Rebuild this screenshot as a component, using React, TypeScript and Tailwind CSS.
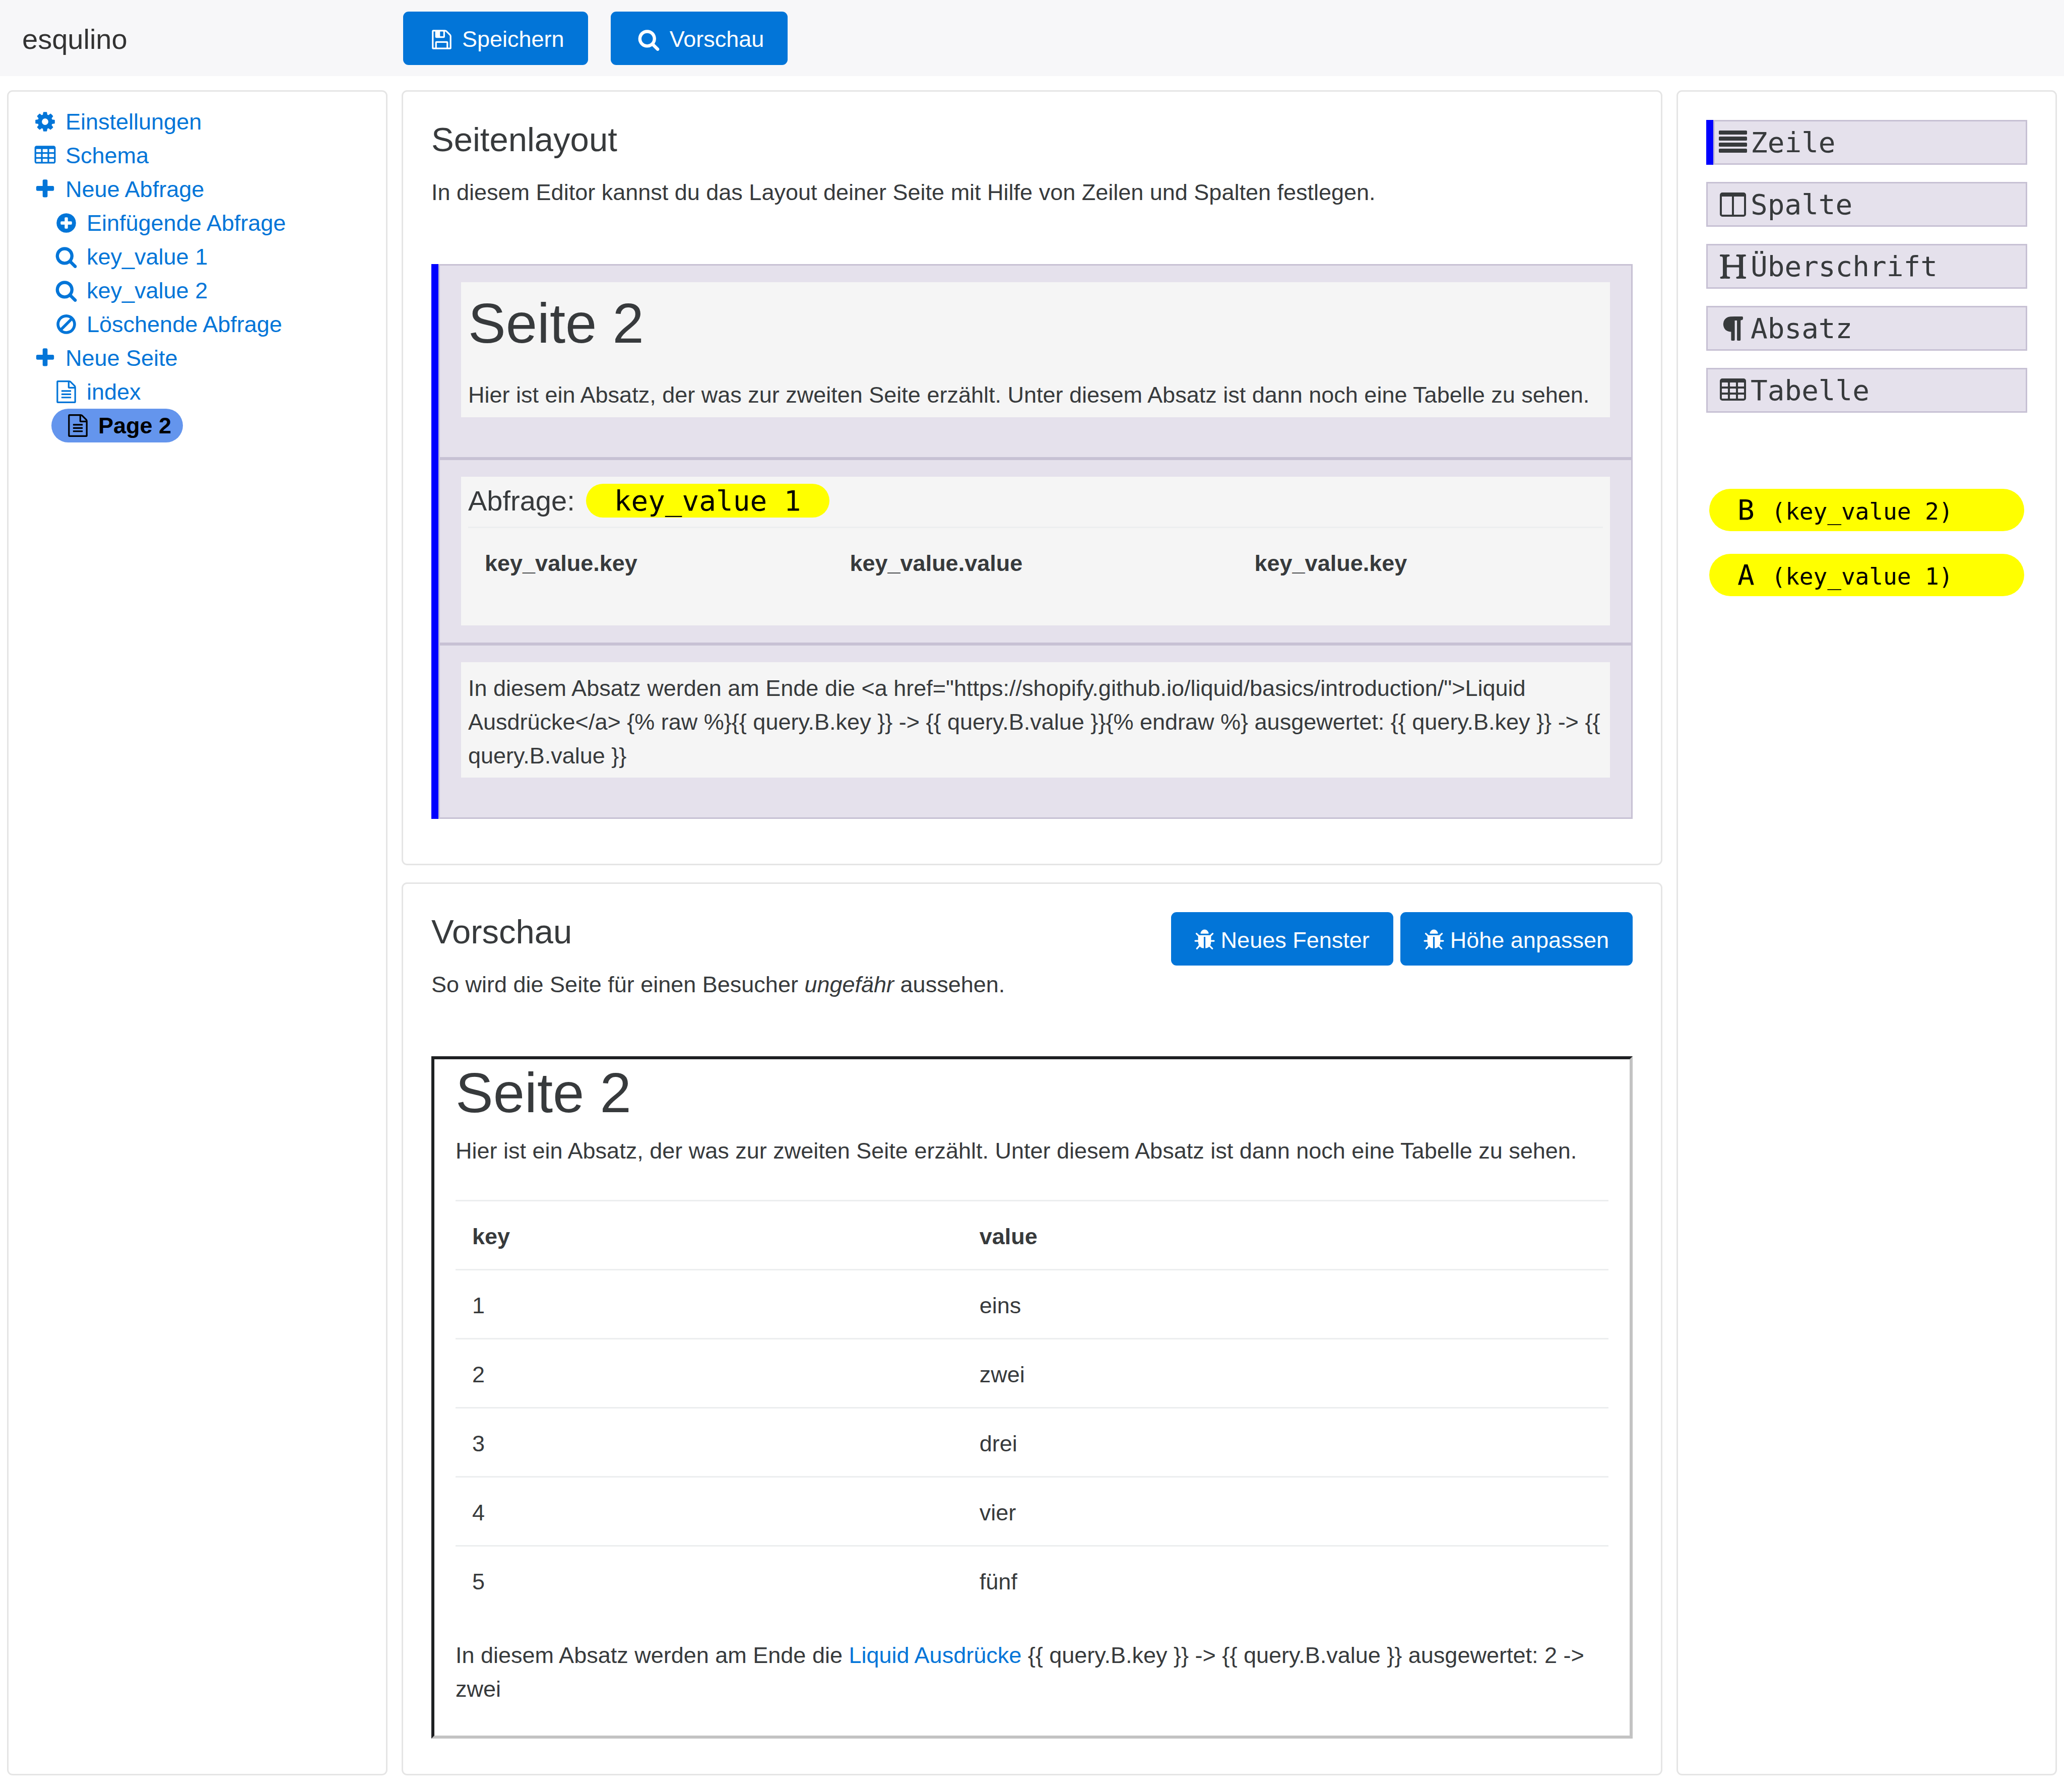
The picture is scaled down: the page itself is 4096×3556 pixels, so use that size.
import type { ReactNode } from "react";

const ICONS = {
  cog: "M1152 896q0-106-75-181t-181-75-181 75-75 181 75 181 181 75 181-75 75-181zm512-109v222q0 12-8 23t-20 13l-185 28q-19 54-39 91 35 50 107 138 10 12 10 25t-9 23q-27 37-99 108t-94 71q-12 0-26-9l-138-108q-44 23-91 38-16 136-29 186-7 28-36 28h-222q-14 0-24.5-8.5t-11.5-21.5l-28-184q-49-16-90-37l-141 107q-10 9-25 9-14 0-25-11-126-114-165-168-7-10-7-23 0-12 8-23 15-21 51-66.5t54-70.5q-27-50-41-99l-183-27q-13-2-21-12.5t-8-23.5v-222q0-12 8-23t19-13l186-28q14-46 39-92-40-57-107-138-10-12-10-24 0-10 9-23 26-36 98.5-107.5t94.5-71.5q13 0 26 10l138 107q44-23 91-38 16-136 29-186 7-28 36-28h222q14 0 24.5 8.5t11.5 21.5l28 184q49 16 90 37l142-107q9-9 24-9 13 0 25 10 129 119 165 170 7 8 7 22 0 12-8 23-15 21-51 66.5t-54 70.5q26 50 41 98l183 28q13 2 21 12.5t8 23.5z",
  table:
    "M576 1376v-192q0-14-9-23t-23-9h-320q-14 0-23 9t-9 23v192q0 14 9 23t23 9h320q14 0 23-9t9-23zm0-384v-192q0-14-9-23t-23-9h-320q-14 0-23 9t-9 23v192q0 14 9 23t23 9h320q14 0 23-9t9-23zm512 384v-192q0-14-9-23t-23-9h-320q-14 0-23 9t-9 23v192q0 14 9 23t23 9h320q14 0 23-9t9-23zm-512-768v-192q0-14-9-23t-23-9h-320q-14 0-23 9t-9 23v192q0 14 9 23t23 9h320q14 0 23-9t9-23zm512 384v-192q0-14-9-23t-23-9h-320q-14 0-23 9t-9 23v192q0 14 9 23t23 9h320q14 0 23-9t9-23zm512 384v-192q0-14-9-23t-23-9h-320q-14 0-23 9t-9 23v192q0 14 9 23t23 9h320q14 0 23-9t9-23zm-512-768v-192q0-14-9-23t-23-9h-320q-14 0-23 9t-9 23v192q0 14 9 23t23 9h320q14 0 23-9t9-23zm512 384v-192q0-14-9-23t-23-9h-320q-14 0-23 9t-9 23v192q0 14 9 23t23 9h320q14 0 23-9t9-23zm0-384v-192q0-14-9-23t-23-9h-320q-14 0-23 9t-9 23v192q0 14 9 23t23 9h320q14 0 23-9t9-23zm128-320v1088q0 66-47 113t-113 47h-1344q-66 0-113-47t-47-113v-1088q0-66 47-113t113-47h1344q66 0 113 47t47 113z",
  plus: "M1600 736v192q0 40-28 68t-68 28h-416v416q0 40-28 68t-68 28h-192q-40 0-68-28t-28-68v-416h-416q-40 0-68-28t-28-68v-192q0-40 28-68t68-28h416v-416q0-40 28-68t68-28h192q40 0 68 28t28 68v416h416q40 0 68 28t28 68z",
  plusCircle:
    "M1344 960v-128q0-26-19-45t-45-19h-256v-256q0-26-19-45t-45-19h-128q-26 0-45 19t-19 45v256h-256q-26 0-45 19t-19 45v128q0 26 19 45t45 19h256v256q0 26 19 45t45 19h128q26 0 45-19t19-45v-256h256q26 0 45-19t19-45zm320-64q0 209-103 385.5t-279.5 279.5-385.5 103-385.5-103-279.5-279.5-103-385.5 103-385.5 279.5-279.5 385.5-103 385.5 103 279.5 279.5 103 385.5z",
  search:
    "M1216 832q0-185-131.5-316.5t-316.5-131.5-316.5 131.5-131.5 316.5 131.5 316.5 316.5 131.5 316.5-131.5 131.5-316.5zm512 832q0 52-38 90t-90 38q-54 0-90-38l-343-342q-179 124-399 124-143 0-273.5-55.5t-225-150-150-225-55.5-273.5 55.5-273.5 150-225 225-150 273.5-55.5 273.5 55.5 225 150 150 225 55.5 273.5q0 220-124 399l343 343q37 37 37 90z",
  ban: "M1440 893q0-161-87-295l-754 753q137 89 297 89 111 0 211.5-43.5t173.5-116.5 116-174.5 43-212.5zm-999 299l755-754q-135-91-300-91-148 0-273 73t-198 199-73 274q0 162 89 299zm1223-299q0 157-61 300t-163.5 246-245 164-298.5 61-298.5-61-245-164-163.5-246-61-300 61-299.5 163.5-245.5 245-164 298.5-61 298.5 61 245 164 163.5 245.5 61 299.5z",
  file: "M1596 380q28 28 48 76t20 88v1152q0 40-28 68t-68 28h-1344q-40 0-68-28t-28-68v-1600q0-40 28-68t68-28h896q40 0 88 20t76 48zm-444-244v376h376q-10-29-22-41l-313-313q-12-12-41-22zm384 1528v-1024h-416q-40 0-68-28t-28-68v-416h-768v1536h1280zm-1024-864q0-14 9-23t23-9h704q14 0 23 9t9 23v64q0 14-9 23t-23 9h-704q-14 0-23-9t-9-23v-64zm736 224q14 0 23 9t9 23v64q0 14-9 23t-23 9h-704q-14 0-23-9t-9-23v-64q0-14 9-23t23-9h704zm0 256q14 0 23 9t9 23v64q0 14-9 23t-23 9h-704q-14 0-23-9t-9-23v-64q0-14 9-23t23-9h704z",
  floppy:
    "M512 1536h768v-384h-768v384zm896 0h128v-896q0-14-10-38.5t-20-34.5l-281-281q-10-10-34-20t-39-10v416q0 40-28 68t-68 28h-576q-40 0-68-28t-28-68v-416h-128v1280h128v-416q0-40 28-68t68-28h832q40 0 68 28t28 68v416zm-384-928v-320q0-13-9.5-22.5t-22.5-9.5h-192q-13 0-22.5 9.5t-9.5 22.5v320q0 13 9.5 22.5t22.5 9.5h192q13 0 22.5-9.5t9.5-22.5zm640 32v928q0 40-28 68t-68 28h-1344q-40 0-68-28t-28-68v-1344q0-40 28-68t68-28h928q40 0 88 20t76 48l280 280q28 28 48 76t20 88z",
  bug: "M1696 960q0 26-19 45t-45 19h-224q0 171-67 290l208 209q19 19 19 45t-19 45q-18 19-45 19t-45-19l-198-197q-5 5-15 13t-42 28.5-65 36.5-82 29-97 13v-896h-128v896q-51 0-101.5-13.5t-87-33-66-39-43.5-32.5l-15-14-183 207q-20 21-48 21-24 0-43-16-19-18-20.5-44.5t15.5-46.5l202-227q-58-114-58-274h-224q-26 0-45-19t-19-45 19-45 45-19h224v-294l-173-173q-19-19-19-45t19-45 45-19 45 19l173 173h844l173-173q19-19 45-19t45 19 19 45-19 45l-173 173v294h224q26 0 45 19t19 45zm-480-576h-640q0-133 93.5-226.5t226.5-93.5 226.5 93.5 93.5 226.5z",
  rows: "M1792 1344v128q0 26-19 45t-45 19h-1664q-26 0-45-19t-19-45v-128q0-26 19-45t45-19h1664q26 0 45 19t19 45zm0-384v128q0 26-19 45t-45 19h-1664q-26 0-45-19t-19-45v-128q0-26 19-45t45-19h1664q26 0 45 19t19 45zm0-384v128q0 26-19 45t-45 19h-1664q-26 0-45-19t-19-45v-128q0-26 19-45t45-19h1664q26 0 45 19t19 45zm0-384v128q0 26-19 45t-45 19h-1664q-26 0-45-19t-19-45v-128q0-26 19-45t45-19h1664q26 0 45 19t19 45z",
  columns:
    "M224 1536h608v-1152h-640v1120q0 13 9.5 22.5t22.5 9.5zm1376-32v-1120h-640v1152h608q13 0 22.5-9.5t9.5-22.5zm128-1216v1216q0 66-47 113t-113 47h-1344q-66 0-113-47t-47-113v-1216q0-66 47-113t113-47h1344q66 0 113 47t47 113z",
  heading:
    "M1682 1664q-44 0-132.5-3.5t-133.5-3.5q-44 0-132 3.5t-132 3.5q-24 0-37-20.5t-13-45.5q0-31 17-46t39-17 51-7 45-15q33-21 33-140l-1-391q0-21-1-31-13-4-50-4h-675q-38 0-51 4-1 10-1 31l-1 371q0 142 37 164 16 10 48 13t57 3.5 45 15 20 45.5q0 26-12.5 48t-36.5 22q-47 0-139.5-3.5t-138.5-3.5q-43 0-128 3.5t-127 3.5q-23 0-35.5-21t-12.5-45q0-30 15.5-45t36-17.5 47.5-7.5 42-15q33-23 33-143l-1-57v-813q0-3 .5-26t0-36.5-1.5-38.5-3.5-42-6.5-36.5-11-31.5-16-18q-15-10-45-12t-53-2-41-14-18-45q0-26 12-48t36-22q46 0 138.5 3.5t138.5 3.5q42 0 126.5-3.5t126.5-3.5q25 0 37.5 22t12.5 48q0 30-17 43.5t-38.5 14.5-49.5 4-43 13q-35 21-35 160l1 320q0 21 1 32 13 3 39 3h699q25 0 38-3 1-11 1-32l1-320q0-139-35-160-18-11-58.5-12.5t-66-13-25.5-49.5q0-26 12.5-48t37.5-22q44 0 132 3.5t132 3.5q43 0 129-3.5t129-3.5q25 0 37.5 22t12.5 48q0 30-17.5 44t-40 14.5-51.5 3-44 12.5q-35 23-35 161l1 943q0 119 34 140 16 10 46 13.5t53.5 4.5 41.5 15.5 18 44.5q0 26-12 48t-36 22z",
  paragraph:
    "M1534 189v73q0 29-18.5 61t-42.5 32q-50 0-54 1-26 6-32 31-3 11-3 64v1152q0 25-18 43t-43 18h-108q-25 0-43-18t-18-43v-1218h-143v1218q0 25-17.5 43t-43.5 18h-108q-26 0-43.5-18t-17.5-43v-496q-147-12-245-59-126-58-192-179-64-117-64-259 0-166 88-286 88-118 209-159 111-37 417-37h479q25 0 43 18t18 43z",
};

type IconName = keyof typeof ICONS;

function Icon({ name, className }: { name: IconName; className: string }) {
  return (
    <svg viewBox="0 0 1792 1792" fill="currentColor" aria-hidden="true" className={`shrink-0 overflow-visible ${className}`}>
      <path d={ICONS[name]} />
    </svg>
  );
}

function Button({ icon, wide, children }: { icon: IconName; wide?: boolean; children: ReactNode }) {
  return (
    <button
      type="button"
      className="flex h-[106px] items-center gap-3 rounded-[11px] bg-[#0275d8] px-[47px] pt-[5px] leading-[56px] whitespace-nowrap text-white"
    >
      <span className={wide ? "flex w-[58px] justify-center" : "flex w-10 justify-center"}>
        <Icon name={icon} className="size-[45px]" />
      </span>
      {children}
    </button>
  );
}

function Card({ className, children }: { className: string; children: ReactNode }) {
  return <section className={`rounded-[11px] border-[3px] border-[#e5e5e5] bg-white ${className}`}>{children}</section>;
}

const NAV: { icon: IconName; label: string; nested?: boolean; active?: boolean }[] = [
  { icon: "cog", label: "Einstellungen" },
  { icon: "table", label: "Schema" },
  { icon: "plus", label: "Neue Abfrage" },
  { icon: "plusCircle", label: "Einfügende Abfrage", nested: true },
  { icon: "search", label: "key_value 1", nested: true },
  { icon: "search", label: "key_value 2", nested: true },
  { icon: "ban", label: "Löschende Abfrage", nested: true },
  { icon: "plus", label: "Neue Seite" },
  { icon: "file", label: "index", nested: true },
  { icon: "file", label: "Page 2", nested: true, active: true },
];

const WIDGETS: { icon: IconName; label: string }[] = [
  { icon: "rows", label: "Zeile" },
  { icon: "columns", label: "Spalte" },
  { icon: "heading", label: "Überschrift" },
  { icon: "paragraph", label: "Absatz" },
  { icon: "table", label: "Tabelle" },
];

const QUERIES = [
  { alias: "B", name: "(key_value 2)" },
  { alias: "A", name: "(key_value 1)" },
];

const VALUES = [
  ["1", "eins"],
  ["2", "zwei"],
  ["3", "drei"],
  ["4", "vier"],
  ["5", "fünf"],
];

function LayoutRow({ className, children }: { className: string; children: ReactNode }) {
  return (
    <div className={`border-[3px] border-[#c7c1d4] bg-[#e5e1ec] px-[42px] pt-[33px] ${className}`}>
      <div className="bg-[#f5f5f5] px-[14px]">{children}</div>
    </div>
  );
}

export default function App() {
  return (
    <div className="flex min-h-screen flex-col bg-white font-['Liberation_Sans',Arial,sans-serif] text-[45px] leading-[67px] text-[#373a3c]">
      <header className="grid h-[151px] grid-cols-[755fr_2502fr_755fr] items-center gap-7 bg-[#f7f7f9] px-[14px]">
        <a href="#" className="px-[30px] pt-[5px] text-[56px] leading-[84px] text-[#333333]">
          esqulino
        </a>
        <div className="flex gap-[45px] pl-[3px]">
          <Button icon="floppy" wide>
            Speichern
          </Button>
          <Button icon="search" wide>
            Vorschau
          </Button>
        </div>
      </header>

      <main className="grid grow grid-cols-[755fr_2502fr_755fr] gap-7 px-[14px] pt-7 pb-[35px]">
        <Card className="pt-[26px]">
          <nav>
            <ul className="pl-[43px]">
              {NAV.map((item) => (
                <li key={item.label} className={item.nested ? "flex pl-[42px]" : "flex"}>
                  <a
                    href="#"
                    className={
                      item.active
                        ? "flex items-center gap-3 rounded-full bg-[#6495ed] px-[23px] font-bold text-black"
                        : "flex items-center gap-3 text-[#0275d8]"
                    }
                  >
                    <span className="flex w-[58px] justify-center">
                      <Icon name={item.icon} className="size-[45px]" />
                    </span>
                    {item.label}
                  </a>
                </li>
              ))}
            </ul>
          </nav>
        </Card>

        <div className="flex min-w-0 flex-col gap-[34px]">
          <Card className="px-14 pt-[58px] pb-[89px]">
            <h4 className="text-[67px] leading-[74px]">Seitenlayout</h4>
            <p className="mt-[34px]">
              In diesem Editor kannst du das Layout deiner Seite mit Hilfe von Zeilen und Spalten festlegen.
            </p>
            <div className="mt-[109px] border-l-[14px] border-[#0000ff]">
              <LayoutRow className="pb-[79px]">
                <h1 className="pt-5 text-[112px] leading-[123px]">Seite 2</h1>
                <p className="mt-[47px] pb-[11px]">
                  Hier ist ein Absatz, der was zur zweiten Seite erzählt. Unter diesem Absatz ist dann noch eine Tabelle zu
                  sehen.
                </p>
              </LayoutRow>
              <LayoutRow className="pb-[34px]">
                <div className="flex items-center gap-[22px] pt-[14px] text-[56px]">
                  Abfrage:
                  <span className="rounded-full bg-[#ffff00] px-14 font-['DejaVu_Sans_Mono',monospace] text-black">
                    key_value 1
                  </span>
                </div>
                <div className="pt-[18px] pb-[59px]">
                  <table className="w-full text-left">
                    <thead>
                      <tr className="border-t-[3px] border-[#eceeef]">
                        <th className="px-[33px] pt-9 pb-[31px]">key_value.key</th>
                        <th className="px-[33px] pt-9 pb-[31px]">key_value.value</th>
                        <th className="px-[33px] pt-9 pb-[31px]">key_value.key</th>
                      </tr>
                    </thead>
                  </table>
                </div>
              </LayoutRow>
              <LayoutRow className="pb-[79px]">
                <p className="pt-[18px] pb-[10px]">
                  {
                    'In diesem Absatz werden am Ende die <a href="https://shopify.github.io/liquid/basics/introduction/">Liquid Ausdrücke</a> {% raw %}{{ query.B.key }} -> {{ query.B.value }}{% endraw %} ausgewertet: {{ query.B.key }} -> {{ query.B.value }}'
                  }
                </p>
              </LayoutRow>
            </div>
          </Card>

          <Card className="grow px-14 pt-14 pb-[70px]">
            <div className="flex items-start justify-between">
              <div className="pt-[2px]">
                <h4 className="text-[67px] leading-[74px]">Vorschau</h4>
                <p className="mt-[34px]">
                  So wird die Seite für einen Besucher <em>ungefähr</em> aussehen.
                </p>
              </div>
              <div className="flex gap-[14px]">
                <Button icon="bug">Neues Fenster</Button>
                <Button icon="bug">Höhe anpassen</Button>
              </div>
            </div>
            <div className="mt-[109px] border-6 border-t-[#1e2022] border-r-[#c3c3c3] border-b-[#c3c3c3] border-l-[#1e2022] px-[42px] pt-[5px] pb-[59px]">
              <h1 className="text-[112px] leading-[123px]">Seite 2</h1>
              <p className="mt-5">
                Hier ist ein Absatz, der was zur zweiten Seite erzählt. Unter diesem Absatz ist dann noch eine Tabelle zu
                sehen.
              </p>
              <table className="mt-16 w-full text-left">
                <thead>
                  <tr className="border-t-[3px] border-[#eceeef]">
                    <th className="w-[44%] px-[33px] pt-9 pb-[31px]">key</th>
                    <th className="px-[33px] pt-9 pb-[31px]">value</th>
                  </tr>
                </thead>
                <tbody>
                  {VALUES.map(([key, value]) => (
                    <tr key={key} className="border-t-[3px] border-[#eceeef]">
                      <td className="px-[33px] pt-9 pb-[31px]">{key}</td>
                      <td className="px-[33px] pt-9 pb-[31px]">{value}</td>
                    </tr>
                  ))}
                </tbody>
              </table>
              <p className="mt-12">
                In diesem Absatz werden am Ende die{" "}
                <a href="#" className="text-[#0275d8]">
                  Liquid Ausdrücke
                </a>
                {" {{ query.B.key }} -> {{ query.B.value }} ausgewertet: 2 -> zwei"}
              </p>
            </div>
          </Card>
        </div>

        <Card className="px-14 pt-14 font-['DejaVu_Sans_Mono',monospace] text-[56px]">
          <ul className="flex flex-col gap-[34px]">
            {WIDGETS.map((widget, index) => (
              <li key={widget.label} className={index === 0 ? "border-l-[14px] border-[#0000ff]" : ""}>
                <div
                  className={
                    index === 0
                      ? "flex items-center border-[3px] border-[#c7c1d4] bg-[#e5e1ec] py-2"
                      : "flex items-center border-[3px] border-[#c7c1d4] bg-[#e5e1ec] px-[14px] py-2"
                  }
                >
                  <span className="flex w-[71px] justify-center">
                    <Icon name={widget.icon} className="size-14" />
                  </span>
                  {widget.label}
                </div>
              </li>
            ))}
          </ul>
          <ul className="mx-[6px] mt-[151px] flex flex-col gap-[45px] text-black">
            {QUERIES.map((query) => (
              <li key={query.alias} className="flex items-baseline rounded-full bg-[#ffff00] px-14 leading-[84px] whitespace-pre">
                {query.alias + " "}
                <span className="text-[46px] leading-[67px]">{query.name}</span>
              </li>
            ))}
          </ul>
        </Card>
      </main>
    </div>
  );
}
